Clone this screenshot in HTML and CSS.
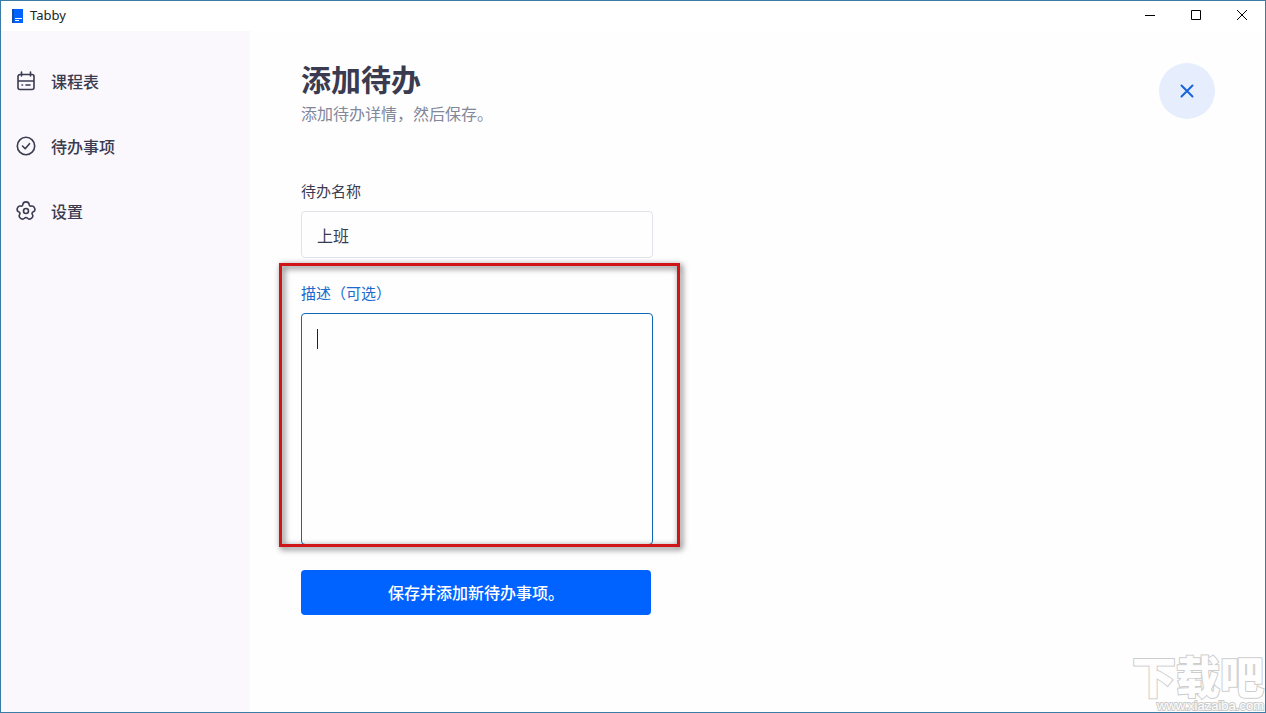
FILE: index.html
```html
<!DOCTYPE html>
<html lang="zh-CN">
<head>
    <meta charset="UTF-8">
    <meta name="viewport" content="width=device-width, initial-scale=1.0">
    <title>Tabby</title>
    <link rel="stylesheet" href="styles.css">
</head>
<body>
    <header class="titlebar">
        <svg class="app-icon" width="12" height="16" viewBox="0 0 12 16">
            <rect x="1" y="1" width="11" height="14" fill="#0062ff"/>
            <rect x="1" y="1" width="2" height="14" fill="#1a4a9c"/>
            <path d="M4 10.500h7M4 12.500h4" stroke="#fff" stroke-width="1"/>
        </svg>
        <span class="app-name">Tabby</span>
        <div class="window-buttons">
            <button type="button" aria-label="最小化">
                <svg width="12" height="12" viewBox="0 0 12 12"><path d="M1 5.500h10"/></svg>
            </button>
            <button type="button" aria-label="最大化">
                <svg width="12" height="12" viewBox="0 0 12 12"><path d="M1.500 .500h9v9h-9z"/></svg>
            </button>
            <button type="button" aria-label="关闭">
                <svg width="12" height="12" viewBox="0 0 12 12"><path d="M1 0l10 10M11 0L1 10"/></svg>
            </button>
        </div>
    </header>

    <div class="layout">
        <nav class="sidebar">
            <a href="#timetable">
                <svg width="20" height="20" viewBox="0 0 20 20">
                    <path d="M4 3.500h12a2 2 0 0 1 2 2v11a2 2 0 0 1-2 2H4a2 2 0 0 1-2-2v-11a2 2 0 0 1 2-2zM2 10h16M5.500 1v4M14.500 1v4M10 14h4M6 14h.500"/>
                </svg>
                课程表
            </a>
            <a href="#todo">
                <svg width="20" height="20" viewBox="0 0 20 20">
                    <circle cx="10" cy="10" r="8.700"/>
                    <path d="M6.500 10l2.700 2.700 4.300-5"/>
                </svg>
                待办事项
            </a>
            <a href="#settings">
                <svg width="20" height="20" viewBox="0 0 20 20">
                    <path d="M10 .9Q12.800 .9 13.050 3.200Q13.300 5.500 15.550 5.050Q17.800 4.600 18.650 7.200Q19.500 9.800 17.400 10.750Q15.300 11.700 16.450 13.700Q17.600 15.700 15.350 17.350Q13.100 19 11.550 17.300Q10 15.600 8.450 17.300Q6.900 19 4.650 17.350Q2.400 15.700 3.550 13.700Q4.700 11.700 2.600 10.750Q.5 9.800 1.350 7.200Q2.200 4.600 4.450 5.050Q6.700 5.500 6.950 3.200Q7.200 .9 10 .9z"/>
                    <circle cx="10" cy="10" r="2.500"/>
                </svg>
                设置
            </a>
        </nav>

        <main>
            <div class="page-header">
                <div>
                    <h1>添加待办</h1>
                    <p class="subtitle">添加待办详情，然后保存。</p>
                </div>
                <button type="button" class="close-btn" aria-label="关闭">
                    <svg width="16" height="16" viewBox="0 0 16 16"><path d="M2.500 2.500l11 11M13.500 2.500l-11 11"/></svg>
                </button>
            </div>

            <form class="todo-form">
                <div class="field">
                    <label for="todo-name">待办名称</label>
                    <input type="text" id="todo-name" value="上班">
                </div>
                <div class="field active">
                    <label for="todo-desc">描述（可选）</label>
                    <textarea id="todo-desc"></textarea>
                    <span class="caret"></span>
                    <span class="highlight"></span>
                </div>
                <button type="submit" class="save-btn">保存并添加新待办事项。</button>
            </form>
        </main>
    </div>

    <div class="watermark">
        <span class="watermark-name">下载吧</span>
        <span class="watermark-url">www.xiazaiba.com</span>
    </div>
</body>
</html>
```
FILE: styles.css
```css
/* Base styles */
* {
    margin: 0;
    padding: 0;
    box-sizing: border-box;
}

:root {
    --primary: #0062ff;
    --active: #1068b8;
    --dark: #3a3b50;
    --muted: #82879a;
    --side: #faf8fc;
    --line: #e2e2e8;
}

body {
    font-family: "Noto Sans", "Noto Sans CJK SC", sans-serif;
    color: var(--dark);
    background: #fefefe;
    border: 1px solid #3a7ca5;
    min-height: 100vh;
    display: flex;
    flex-direction: column;
    position: relative;
    overflow: hidden;
}

button,
input,
textarea {
    font: inherit;
    color: inherit;
    border: none;
    background: none;
}

svg {
    fill: none;
    flex-shrink: 0;
}

/* Title bar */
.titlebar {
    display: flex;
    align-items: center;
    height: 30px;
    padding-left: 10px;
    background: #fff;
}

.app-name {
    margin-left: 7px;
    font-size: 13px;
    line-height: 18px;
    padding-bottom: 2px;
    color: #222;
}

.window-buttons {
    display: flex;
    margin-left: auto;
}

.window-buttons button {
    display: flex;
    align-items: center;
    justify-content: center;
    width: 46px;
    height: 30px;
}

.window-buttons svg {
    stroke: #000;
    stroke-width: 1;
}

/* Sidebar */
.layout {
    flex: 1;
    display: flex;
}

.sidebar {
    width: 249px;
    flex-shrink: 0;
    padding-top: 17px;
    background: var(--side);
}

.sidebar a {
    display: flex;
    align-items: center;
    gap: 15px;
    height: 65px;
    padding-left: 15px;
    font-size: 16px;
    font-weight: 500;
    color: var(--dark);
    text-decoration: none;
}

.sidebar svg {
    stroke: var(--dark);
    stroke-width: 1.6;
    stroke-linecap: round;
    stroke-linejoin: round;
}

/* Page content */
main {
    flex: 1;
    padding: 28px 50px 28px 51px;
}

.page-header {
    display: flex;
    justify-content: space-between;
    align-items: center;
}

h1 {
    font-size: 30px;
    line-height: 42px;
    font-weight: 700;
}

.subtitle {
    font-size: 16px;
    line-height: 26px;
    color: var(--muted);
}

.close-btn {
    display: flex;
    align-items: center;
    justify-content: center;
    width: 56px;
    height: 56px;
    margin-bottom: 4px;
    border-radius: 50%;
    background: #e6edfd;
}

.close-btn svg {
    stroke: #1764d8;
    stroke-width: 2;
    stroke-linecap: round;
}

/* Form */
.todo-form {
    max-width: 352px;
    margin-top: 54px;
}

.field {
    position: relative;
    margin-bottom: 25px;
}

.field label {
    display: block;
    margin-bottom: 10px;
    font-size: 15px;
    line-height: 20px;
}

.field input,
.field textarea {
    display: block;
    width: 100%;
    padding: 0 15px;
    border: 1px solid var(--line);
    border-radius: 4px;
    font-size: 16px;
    outline: none;
    resize: none;
}

.field input {
    height: 47px;
}

.field textarea {
    height: 232px;
    padding: 12px 15px;
}

.field.active label {
    color: #1a6ad0;
}

.field.active textarea {
    border-color: var(--active);
    caret-color: transparent;
}

.caret {
    position: absolute;
    left: 16px;
    top: 46px;
    width: 1px;
    height: 20px;
    background: #222;
}

/* Red frame around the description field */
.highlight {
    position: absolute;
    inset: -20px -27px -2px -22px;
    border: 3px solid #d01418;
    filter: drop-shadow(2px 2px 3px rgba(0, 0, 0, 0.7));
    pointer-events: none;
}

.save-btn {
    width: calc(100% - 2px);
    height: 45px;
    padding-bottom: 2px;
    border-radius: 4px;
    background: var(--primary);
    color: #fff;
    font-size: 16px;
    font-weight: 500;
    cursor: pointer;
}

/* Watermark */
.watermark {
    position: absolute;
    right: 1px;
    bottom: 0;
    display: flex;
    flex-direction: column;
    align-items: flex-end;
    color: #fefefe;
    -webkit-text-stroke: 2px #cdcdcd;
    paint-order: stroke fill;
    pointer-events: none;
}

.watermark-name {
    font-size: 44px;
    line-height: 46px;
    font-weight: 900;
}

.watermark-url {
    font-family: "Liberation Sans", sans-serif;
    font-size: 13px;
    line-height: 12px;
}
```
